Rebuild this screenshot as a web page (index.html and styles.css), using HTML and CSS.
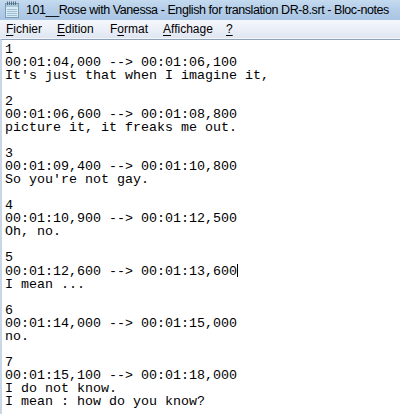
FILE: index.html
```html
<!DOCTYPE html>
<html>
<head>
<meta charset="utf-8">
<link rel="stylesheet" href="styles.css">
</head>
<body>
<div class="win">
  <div class="titlebar">
    <svg class="icon" width="16" height="17" viewBox="0 0 16 17">
      <rect x="1.5" y="2.5" width="13" height="14" fill="#d8eaf4" stroke="#7b9bb0"/>
      <rect x="2" y="3" width="12" height="3" fill="#a9c8dc"/>
      <g stroke="#55707f" stroke-width="1">
        <line x1="3.5" y1="0.5" x2="3.5" y2="4"/>
        <line x1="5.5" y1="0.5" x2="5.5" y2="4"/>
        <line x1="7.5" y1="0.5" x2="7.5" y2="4"/>
        <line x1="9.5" y1="0.5" x2="9.5" y2="4"/>
        <line x1="11.5" y1="0.5" x2="11.5" y2="4"/>
      </g>
      <g stroke="#9fc0d4" stroke-width="1">
        <line x1="3" y1="8.5" x2="13" y2="8.5"/>
        <line x1="3" y1="10.5" x2="13" y2="10.5"/>
        <line x1="3" y1="12.5" x2="13" y2="12.5"/>
        <line x1="3" y1="14.5" x2="13" y2="14.5"/>
      </g>
    </svg>
    <span class="title">101__Rose with Vanessa - English for translation DR-8.srt - Bloc-notes</span>
  </div>
  <div class="menubar">
    <span class="mi m1"><u>F</u>ichier</span>
    <span class="mi m2"><u>E</u>dition</span>
    <span class="mi m3">F<u>o</u>rmat</span>
    <span class="mi m4"><u>A</u>ffichage</span>
    <span class="mi m5"><u>?</u></span>
  </div>
  <div class="editor">
<pre class="text">1
00:01:04,000 --&gt; 00:01:06,100
It's just that when I imagine it,

2
00:01:06,600 --&gt; 00:01:08,800
picture it, it freaks me out.

3
00:01:09,400 --&gt; 00:01:10,800
So you're not gay.

4
00:01:10,900 --&gt; 00:01:12,500
Oh, no.

5
00:01:12,600 --&gt; 00:01:13,600<span class="caret"></span>
I mean ...

6
00:01:14,000 --&gt; 00:01:15,000
no.

7
00:01:15,100 --&gt; 00:01:18,000
I do not know.
I mean : how do you know?</pre>
  </div>
</div>
</body>
</html>
```
FILE: styles.css
```css
html, body {
  margin: 0;
  padding: 0;
  background: #ffffff;
  overflow: hidden;
}
.win {
  width: 400px;
  height: 414px;
  display: flex;
  flex-direction: column;
}
.titlebar {
  height: 20px;
  display: flex;
  align-items: center;
  background: linear-gradient(to bottom, #c4daef 0%, #b4cde8 50%, #a9c5e4 100%);
  padding-left: 4px;
  gap: 6px;
  flex: none;
  overflow: hidden;
}
.icon {
  flex: none;
  margin-top: -1px;
}
.title {
  font-family: "Liberation Sans", Arial, sans-serif;
  font-size: 12.5px;
  letter-spacing: -0.42px;
  color: #000;
  white-space: nowrap;
}
.menubar {
  height: 18px;
  display: flex;
  align-items: center;
  background: linear-gradient(to bottom, #f4f7fc 0%, #e9eef6 60%, #dfe6f1 100%);
  border-bottom: 1px solid #f4f6fa;
  padding-left: 6px;
  flex: none;
  font-family: "Liberation Sans", Arial, sans-serif;
  font-size: 12px;
  color: #000;
}
.mi {
  flex: none;
}
.m1 { width: 51px; }
.m2 { width: 53px; }
.m3 { width: 53px; }
.m4 { width: 63px; }
.mi u {
  text-decoration-thickness: 1px;
  text-underline-offset: 2px;
}
.editor {
  flex: 1;
  border-top: 1px solid #8ea2ba;
  border-left: 2px solid #c9d6e5;
  background: #fff;
  padding: 3px 0 0 3px;
}
.text {
  margin: 0;
  font-family: "Liberation Mono", "DejaVu Sans Mono", monospace;
  font-size: 13.33px;
  line-height: 13px;
  color: #000;
}
.caret {
  display: inline-block;
  width: 1px;
  height: 13px;
  background: #000;
  vertical-align: -2px;
}
```
